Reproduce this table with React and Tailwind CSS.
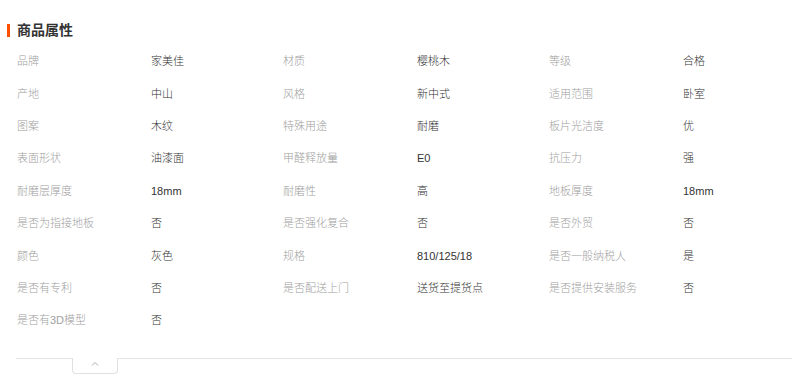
import React from "react";

const rows = [
  ["品牌", "家美佳", "材质", "樱桃木", "等级", "合格"],
  ["产地", "中山", "风格", "新中式", "适用范围", "卧室"],
  ["图案", "木纹", "特殊用途", "耐磨", "板片光洁度", "优"],
  ["表面形状", "油漆面", "甲醛释放量", "E0", "抗压力", "强"],
  ["耐磨层厚度", "18mm", "耐磨性", "高", "地板厚度", "18mm"],
  ["是否为指接地板", "否", "是否强化复合", "否", "是否外贸", "否"],
  ["颜色", "灰色", "规格", "810/125/18", "是否一般纳税人", "是"],
  ["是否有专利", "否", "是否配送上门", "送货至提货点", "是否提供安装服务", "否"],
  ["是否有3D模型", "否"],
];

export default function App() {
  return (
    <div
      className="w-[792px] h-[388px] bg-white overflow-hidden"
      style={{ fontFamily: '"Liberation Sans", "Noto Sans CJK SC", sans-serif' }}
    >
      <div className="flex items-center h-[14px] mt-[23px] pl-[7px]">
        <div className="w-[3px] h-[13px] bg-[#ff5000]" />
        <div className="ml-[7px] text-[14px] font-bold text-[#333] leading-[14px]">商品属性</div>
      </div>
      <div className="mt-[8px] pl-[17px] grid grid-cols-[134px_132px_134px_132px_134px_132px] auto-rows-[32.4px] items-center text-[11px] leading-[14px] font-light">
        {rows.map((r, i) =>
          r.map((t, j) => (
            <div key={i + "-" + j} className={j % 2 === 0 ? "text-[#a0a0a0]" : "text-[#333]"}>
              {t}
            </div>
          ))
        )}
      </div>
      <div className="mt-[21px] ml-[16px] relative border-t border-[#e5e5e5]">
        <div className="absolute left-[56px] top-[-1px] w-[46px] h-[16px] bg-white border border-t-0 border-[#e0e0e0] rounded-b-[4px] flex justify-center pt-[3px]">
          <svg width="8" height="5" viewBox="0 0 8 5">
            <polyline points="1,4.5 4,1.5 7,4.5" fill="none" stroke="#aaa" strokeWidth="1" />
          </svg>
        </div>
      </div>
    </div>
  );
}
